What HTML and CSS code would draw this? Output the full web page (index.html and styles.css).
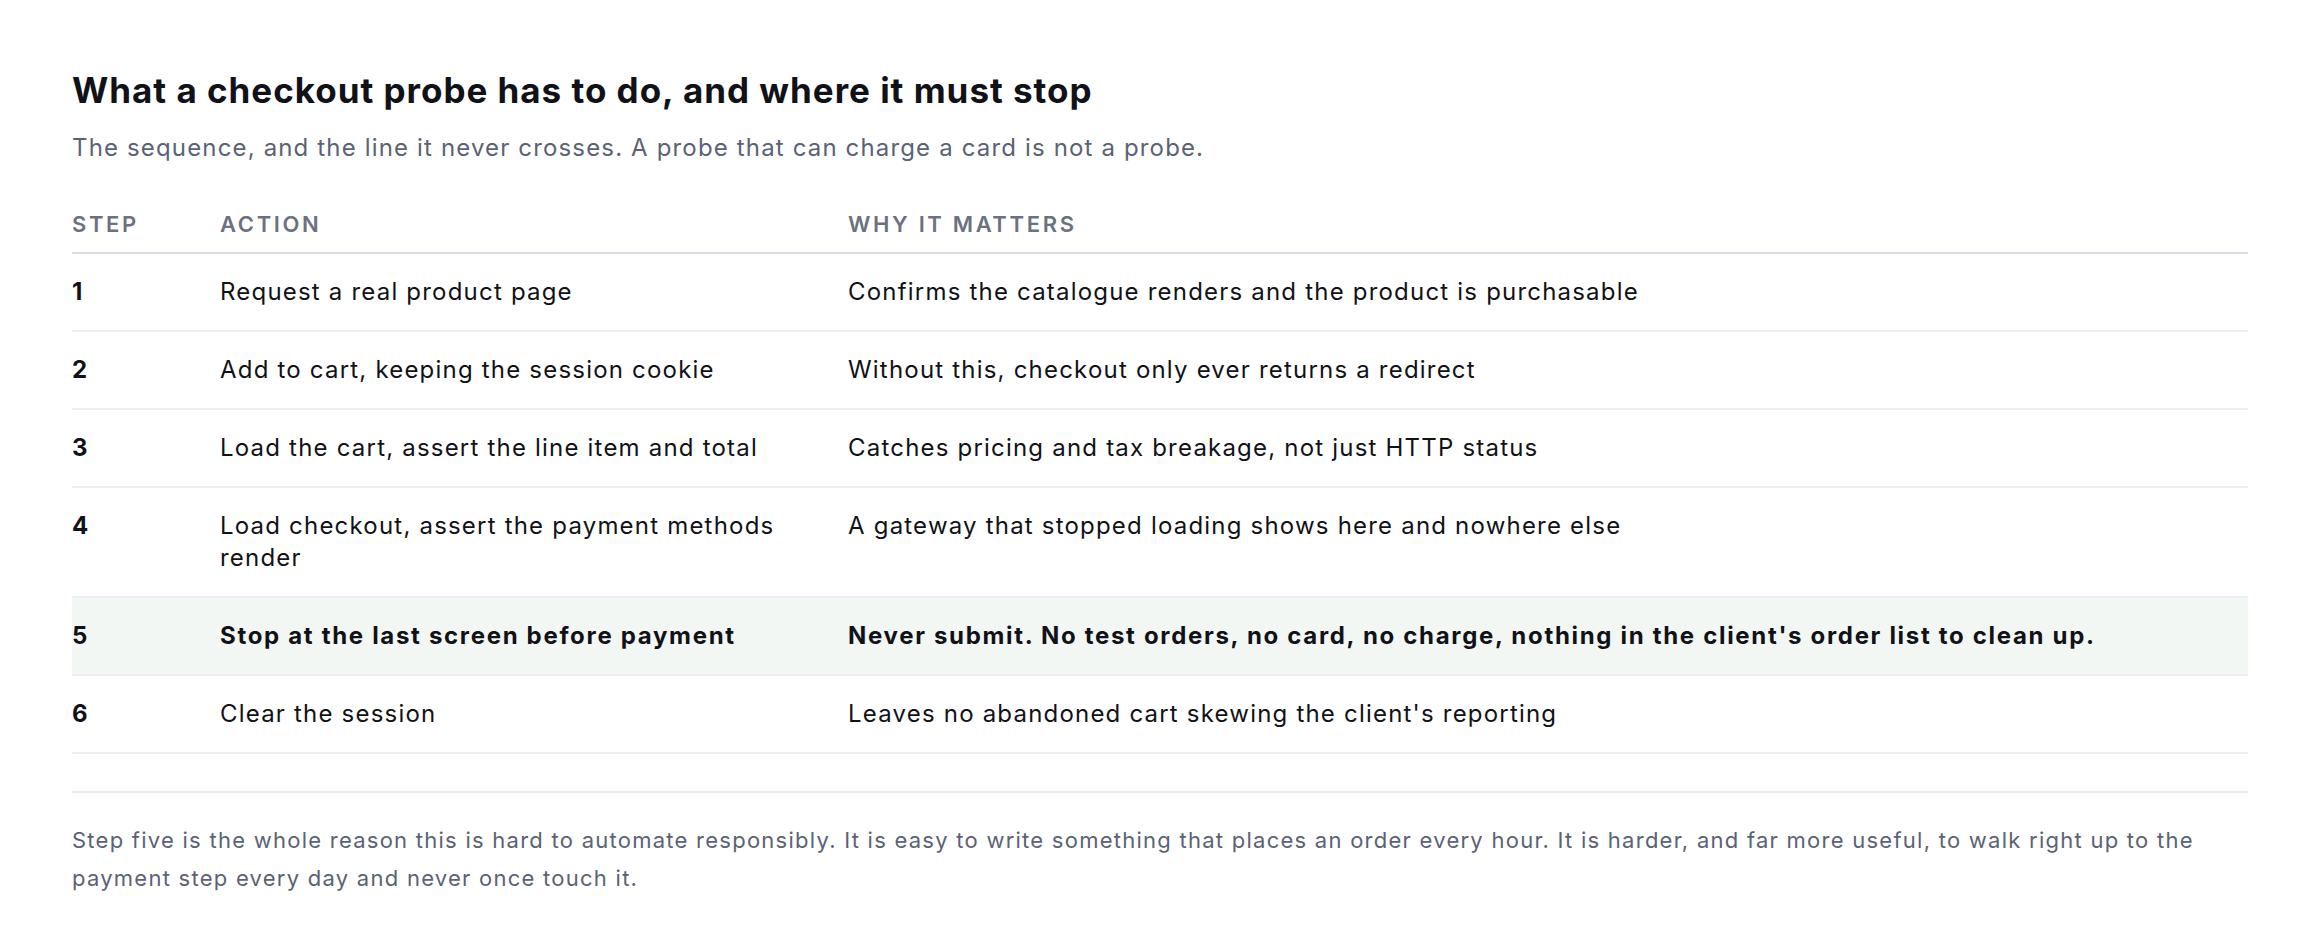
FILE: index.html
```html
<!DOCTYPE html>
<html lang="en">
<head>
<meta charset="utf-8">
<title>Checkout probe</title>
<link rel="stylesheet" href="styles.css">
</head>
<body>
<main class="page">
  <h1 class="title">What a checkout probe has to do, and where it must stop</h1>
  <p class="subtitle">The sequence, and the line it never crosses. A probe that can charge a card is not a probe.</p>
  <table class="steps">
    <colgroup>
      <col class="col-step">
      <col class="col-action">
      <col class="col-why">
    </colgroup>
    <thead>
      <tr>
        <th>Step</th>
        <th>Action</th>
        <th>Why it matters</th>
      </tr>
    </thead>
    <tbody>
      <tr>
        <td class="num">1</td>
        <td>Request a real product page</td>
        <td>Confirms the catalogue renders and the product is purchasable</td>
      </tr>
      <tr>
        <td class="num">2</td>
        <td>Add to cart, keeping the session cookie</td>
        <td>Without this, checkout only ever returns a redirect</td>
      </tr>
      <tr>
        <td class="num">3</td>
        <td>Load the cart, assert the line item and total</td>
        <td>Catches pricing and tax breakage, not just HTTP status</td>
      </tr>
      <tr>
        <td class="num">4</td>
        <td>Load checkout, assert the payment methods render</td>
        <td>A gateway that stopped loading shows here and nowhere else</td>
      </tr>
      <tr class="stop">
        <td class="num">5</td>
        <td>Stop at the last screen before payment</td>
        <td>Never submit. No test orders, no card, no charge, nothing in the client's order list to clean up.</td>
      </tr>
      <tr>
        <td class="num">6</td>
        <td>Clear the session</td>
        <td>Leaves no abandoned cart skewing the client's reporting</td>
      </tr>
    </tbody>
  </table>
  <p class="note">Step five is the whole reason this is hard to automate responsibly. It is easy to write something that places an order every hour. It is harder, and far more useful, to walk right up to the payment step every day and never once touch it.</p>
</main>
</body>
</html>
```

FILE: styles.css
```css
html, body {
  margin: 0;
  padding: 0;
  background: #ffffff;
}

body {
  font-family: Inter, "Noto Sans", "Liberation Sans", sans-serif;
  color: #111218;
}

.page {
  padding: 70px 72px 40px;
}

.title {
  margin: 0;
  font-size: 35px;
  line-height: 41px;
  font-weight: 700;
  letter-spacing: 0.028em;
  color: #111218;
}

.subtitle {
  margin: 19px 0 0;
  font-size: 24px;
  line-height: 36px;
  letter-spacing: 0.048em;
  color: #5b6276;
}

.steps {
  width: 100%;
  margin-top: 43px;
  border-collapse: collapse;
  table-layout: fixed;
}

.col-step { width: 148px; }
.col-action { width: 628px; }

.steps th {
  text-align: left;
  padding: 0 24px 13px 0;
  font-size: 22px;
  line-height: 30px;
  font-weight: 600;
  letter-spacing: 0.12em;
  text-transform: uppercase;
  color: #6b7180;
  border-bottom: 2px solid #d9dce5;
}

.steps td {
  padding: 22px 24px 22px 0;
  font-size: 24px;
  line-height: 32px;
  letter-spacing: 0.05em;
  vertical-align: top;
  color: #111218;
  border-bottom: 2px solid #eeeef2;
}

.steps td.num {
  font-weight: 700;
}

.steps tr.stop td {
  background: #f3f7f4;
  font-weight: 700;
  letter-spacing: 0.07em;
}

.note {
  margin: 37px 0 0;
  padding-top: 28px;
  border-top: 2px solid #e8e8ee;
  font-size: 22px;
  line-height: 38px;
  letter-spacing: 0.057em;
  color: #5b6276;
}
```
